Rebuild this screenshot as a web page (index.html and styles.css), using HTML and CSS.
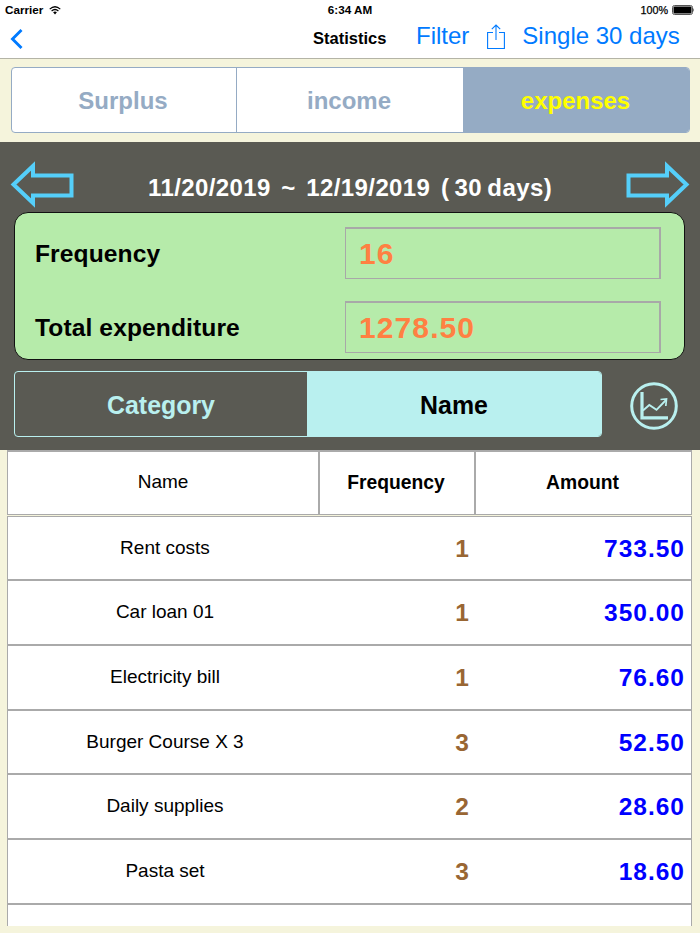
FILE: index.html
```html
<!DOCTYPE html>
<html lang="en">
<head>
<meta charset="utf-8">
<title>Statistics</title>
<link rel="stylesheet" href="styles.css">
</head>
<body>
<div class="app">
  <header class="top">
    <div class="status">
      <div class="carrier">Carrier
        <svg width="12" height="9" viewBox="0 0 12 9" fill="none" stroke="#000" stroke-width="1.2"><path d="M.7 3.1Q6-1.6 11.3 3.1M2.6 5Q6 2 9.4 5"/><path d="M4.1 6.3Q6 4.8 7.9 6.3L6 8.5Z" fill="#000" stroke="none"/></svg>
      </div>
      <div class="clock">6:34 AM</div>
      <div class="power">100%
        <svg width="23" height="10" viewBox="0 0 23 10"><rect x=".5" y=".5" width="20" height="9" rx="2" fill="#fff" stroke="#555"/><rect x="1.500" y="1.500" width="18" height="7" rx="1"/><path d="M21.3 3Q22.8 5 21.3 7Z" fill="#333"/></svg>
      </div>
    </div>
    <nav class="nav">
      <svg class="back" width="13" height="20" viewBox="0 0 13 20" fill="none" stroke="#007aff" stroke-width="2.9"><path d="M11.500 1 2.500 10l9 9"/></svg>
      <h1>Statistics</h1>
      <div class="actions">
        <span>Filter</span>
        <svg width="18" height="26" viewBox="0 0 18 26" fill="none" stroke="#007aff" stroke-width="1.1"><path d="M6 8.5H.6v16h16.8v-16H12M9 16V1M4.8 5.2 9 1l4.2 4.2"/></svg>
        <span>Single 30 days</span>
      </div>
    </nav>
  </header>

  <div class="modes">
    <div class="mode">Surplus</div>
    <div class="mode">income</div>
    <div class="mode on">expenses</div>
  </div>

  <section class="summary">
    <div class="period">
      <svg width="66" height="48" viewBox="0 0 66 48" fill="none" stroke="#55cffa" stroke-width="4"><path d="M4.500 24.500 24 6V15.500H62.500V35.500H24V43Z"/></svg>
      <span class="range">11/20/2019&nbsp; ~&nbsp; 12/19/2019&nbsp; ( 30 days)</span>
      <svg width="66" height="48" viewBox="0 0 66 48" fill="none" stroke="#55cffa" stroke-width="4"><path d="M61.500 24.500 42 6V15.500H3.500V35.500H42V43Z"/></svg>
    </div>
    <div class="panel">
      <div class="label">Frequency</div><div class="field">16</div>
      <div class="label">Total expenditure</div><div class="field">1278.50</div>
    </div>
    <div class="grouping">
      <div class="tabs">
        <div class="tab">Category</div>
        <div class="tab on">Name</div>
      </div>
      <svg width="50" height="50" viewBox="0 0 50 50" fill="none" stroke="#b9f0ef"><circle cx="25" cy="25" r="22.300" stroke-width="3"/><path d="M13 11V36.800H39" stroke-width="3.200"/><path d="M14 29.500 20.300 24 27.500 28.800 37 19" stroke-width="1.900"/><path d="M31.500 18.500 37.500 18 36.800 25" stroke-width="1.700"/></svg>
    </div>
  </section>

  <main class="table">
    <div class="head">
      <div class="name">Name</div><div class="count">Frequency</div><div class="sum">Amount</div>
    </div>
    <div class="rows">
      <div class="row"><div>Rent costs</div><b>1</b><strong>733.50</strong></div>
      <div class="row"><div>Car loan 01</div><b>1</b><strong>350.00</strong></div>
      <div class="row"><div>Electricity bill</div><b>1</b><strong>76.60</strong></div>
      <div class="row"><div>Burger Course X 3</div><b>3</b><strong>52.50</strong></div>
      <div class="row"><div>Daily supplies</div><b>2</b><strong>28.60</strong></div>
      <div class="row"><div>Pasta set</div><b>3</b><strong>18.60</strong></div>
      <div class="row"></div>
    </div>
  </main>
</div>
</body>
</html>
```
FILE: styles.css
```css
* { box-sizing: border-box; }
body { margin: 0; font-family: "Liberation Sans", Arial, sans-serif; }
.app { width: 700px; height: 933px; overflow: hidden; background: #f5f4dc; display: flex; flex-direction: column; }

.top { height: 59px; background: #fff; border-bottom: 1px solid #b4b4a6; }
.status { height: 20px; padding: 0 5px; display: grid; grid-template-columns: 1fr auto 1fr; font-size: 11.7px; line-height: 20px; font-weight: bold; }
.carrier, .power { display: flex; align-items: center; gap: 6px; }
.power { justify-content: flex-end; gap: 4px; font-size: 10.8px; font-weight: normal; -webkit-text-stroke: .25px #000; }
.nav { height: 38px; display: grid; grid-template-columns: 313px 103px 1fr; align-items: start; }
.back { margin: 9px 0 0 10px; }
h1 { margin: 0; font-size: 16.500px; line-height: 36px; }
.actions { display: flex; align-items: center; color: #007aff; font-size: 24px; line-height: 32px; }
.actions svg { margin: 2px 17px 0 18px; }

.modes { height: 66px; margin: 8px 10px 9px 11px; border: 1px solid #95abc4; border-radius: 4px; background: #fff; display: grid; grid-template-columns: 224px 227px 1fr; color: #95abc4; font-size: 24px; font-weight: bold; line-height: 66px; text-align: center; overflow: hidden; }
.mode { padding-right: 2px; }
.mode + .mode { border-left: 1px solid #95abc4; }
.mode.on { background: #95abc4; color: #ff0; }

.summary { height: 308px; background: #5a5a53; }
.period { height: 70px; padding: 18px 9px 0; display: flex; justify-content: space-between; align-items: flex-start; }
.range { color: #fff; font-size: 24px; font-weight: bold; line-height: 55px; letter-spacing: .4px; word-spacing: -1.8px; }
.panel { height: 148px; margin: 0 15px 0 14px; padding: 14px 23px 0 20px; border: 1px solid #111; border-radius: 14px; background: #b6ebaa; display: grid; grid-template-columns: 1fr 316px; grid-auto-rows: 52px; row-gap: 22px; }
.label { font-size: 24.600px; font-weight: bold; line-height: 54px; letter-spacing: .1px; }
.field { border: 1px solid #a8a8a8; border-top-width: 2px; border-right-width: 2px; padding-left: 13px; color: #ff8042; font-size: 30px; font-weight: bold; line-height: 50px; letter-spacing: 1.1px; }
.grouping { display: flex; gap: 27px; padding: 11px 0 0 14px; }
.grouping svg { margin-top: 10px; }
.tabs { width: 588px; height: 66px; display: grid; grid-template-columns: 292px 1fr; border: 1px solid #b9f0ef; border-radius: 4px; color: #b9f0ef; font-size: 24.900px; font-weight: bold; line-height: 66px; text-align: center; overflow: hidden; }
.tab.on { background: #b9f0ef; color: #000; }

.table { margin: 0 8px 0 7px; width: 685px; height: 476px; overflow: hidden; display: flex; flex-direction: column; gap: 1px; }
.head { height: 65px; flex: none; display: grid; grid-template-columns: 310px 156px 1fr; background: #fff; border: 1px solid #aaa; border-top-width: 2px; text-align: center; font-size: 19.300px; font-weight: bold; line-height: 62px; }
.head .name { font-weight: normal; font-size: 19px; line-height: 60px; }
.count, .sum { border-left: 2px solid #aaa; padding-right: 2px; }
.rows { border: 1px solid #aaa; background: #fff; }
.row { height: 64.750px; border-bottom: 2px solid #aaa; display: grid; grid-template-columns: 314px 280px 1fr; line-height: 62px; font-size: 19px; text-align: center; }
.row:first-child { height: 64px; }
.row b, .row strong { font-size: 24.500px; line-height: 64px; }
.row b { color: #996633; }
.row strong { color: #00f; text-align: right; letter-spacing: 1px; padding-right: 6px; }
```
